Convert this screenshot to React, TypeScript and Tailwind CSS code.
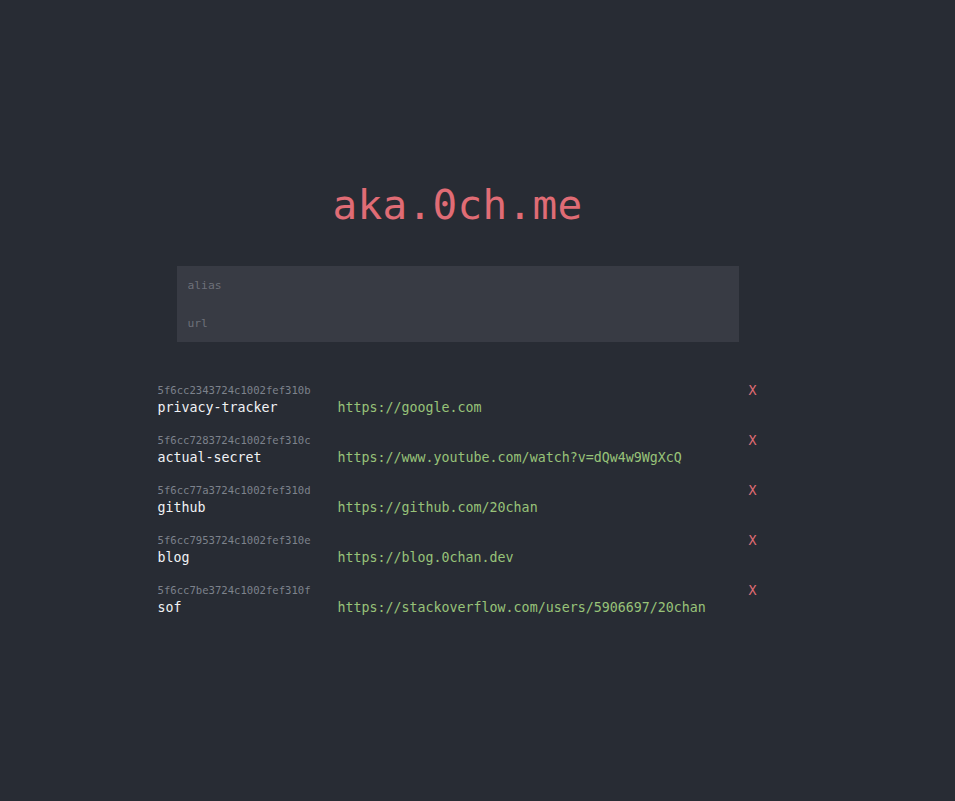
const links = [
  { id: "5f6cc2343724c1002fef310b", alias: "privacy-tracker", url: "https://google.com" },
  { id: "5f6cc7283724c1002fef310c", alias: "actual-secret", url: "https://www.youtube.com/watch?v=dQw4w9WgXcQ" },
  { id: "5f6cc77a3724c1002fef310d", alias: "github", url: "https://github.com/20chan" },
  { id: "5f6cc7953724c1002fef310e", alias: "blog", url: "https://blog.0chan.dev" },
  { id: "5f6cc7be3724c1002fef310f", alias: "sof", url: "https://stackoverflow.com/users/5906697/20chan" },
];

export default function App() {
  return (
    <div className="min-h-screen w-full bg-[#282c34] font-['DejaVu_Sans_Mono',monospace]">
      <div className="w-[915px] flex flex-col items-center pt-[180px]">
        <h1 className="text-[#e06c75] text-[41px] leading-[50px] tracking-[0.3px]">aka.0ch.me</h1>

        <form className="mt-[36px] w-[562px] bg-[#383b44] flex flex-col">
          <input
            placeholder="alias"
            className="h-[38px] px-[11px] bg-transparent text-[11.3px] text-[#abb2bf] placeholder:text-[#6d7079] outline-none"
          />
          <input
            placeholder="url"
            className="h-[38px] px-[11px] bg-transparent text-[11.3px] text-[#abb2bf] placeholder:text-[#6d7079] outline-none"
          />
        </form>

        <div className="mt-[41px] w-[600px] flex flex-col gap-[14px]">
          {links.map((l) => (
            <div key={l.id} className="flex items-start">
              <div className="w-[180px] flex flex-col">
                <span className="text-[10.6px] leading-[14px] text-[#7d828c]">{l.id}</span>
                <span className="text-[13.3px] leading-[22px] text-[#f0f2f5]">{l.alias}</span>
              </div>
              <span className="flex-1 mt-[14px] text-[13.3px] leading-[22px] text-[#98c379]">{l.url}</span>
              <button className="w-[12px] mr-[1px] mt-[1px] text-right text-[13.3px] leading-[14px] text-[#e06c75]">X</button>
            </div>
          ))}
        </div>
      </div>
    </div>
  );
}
